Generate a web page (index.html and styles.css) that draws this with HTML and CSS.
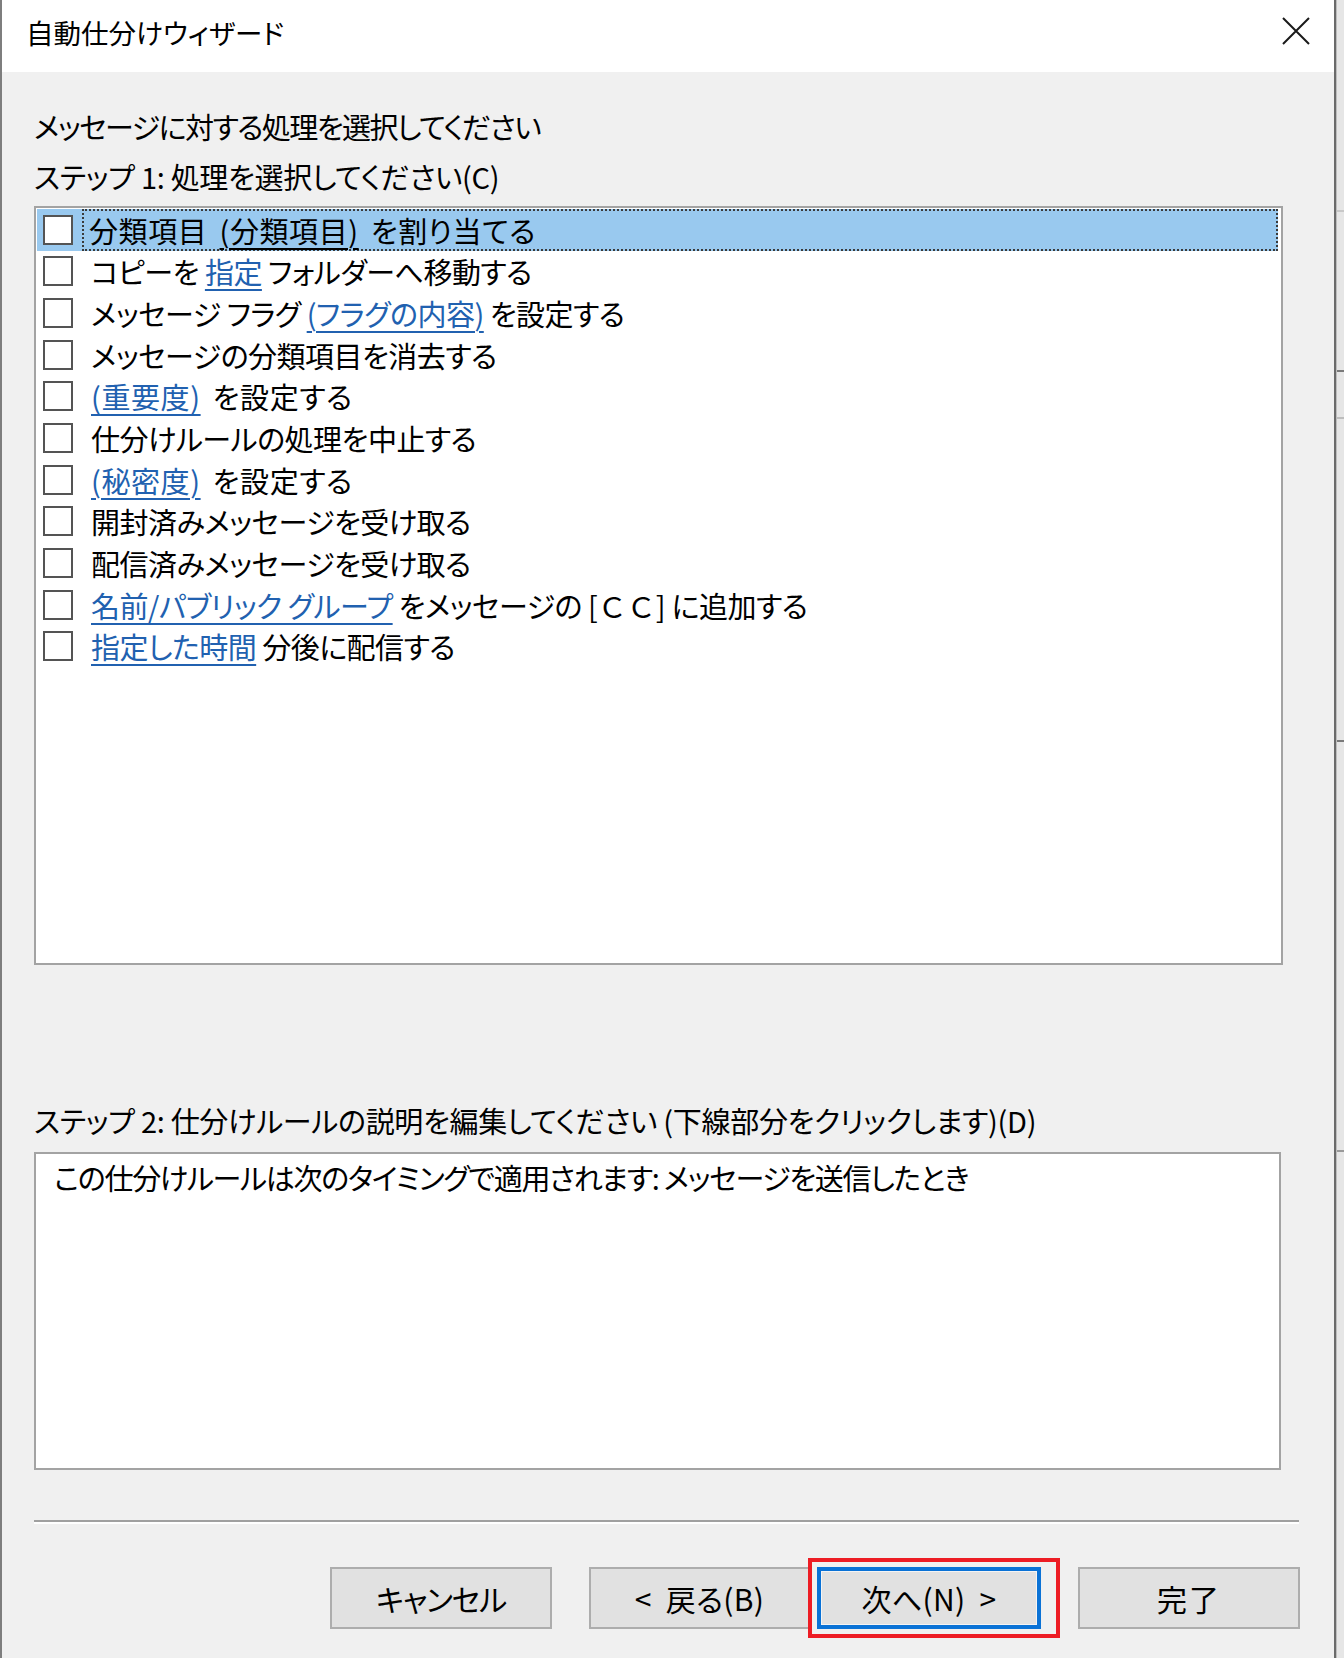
FILE: index.html
```html
<!DOCTYPE html>
<html lang="ja">
<head>
<meta charset="utf-8">
<title>自動仕分けウィザード</title>
<link rel="stylesheet" href="styles.css">
</head>
<body>
<div class="screen">
  <div class="dialog">
    <div class="titlebar">
      <span class="title">自動仕分けウィザード</span>
      <svg class="close" width="28" height="28" viewBox="0 0 28 28"><path d="M1 1 L27 27 M27 1 L1 27" stroke="#1a1a1a" stroke-width="2" fill="none"/></svg>
    </div>
    <div class="body">
      <div class="label first">メッセージに対する処理を選択してください</div>
      <div class="label">ステップ 1: 処理を選択してください(C)</div>
      <div class="listbox">
        <div class="row selected"><span class="check"></span><span class="text"><span>分類項目 <u class="dark">(分類項目)</u> を割り当てる</span></span></div>
        <div class="row"><span class="check"></span><span class="text">コピーを <u class="link">指定</u> フォルダーへ移動する</span></div>
        <div class="row"><span class="check"></span><span class="text">メッセージ フラグ <u class="link">(フラグの内容)</u> を設定する</span></div>
        <div class="row"><span class="check"></span><span class="text">メッセージの分類項目を消去する</span></div>
        <div class="row"><span class="check"></span><span class="text paren"><u class="link">(重要度)</u> を設定する</span></div>
        <div class="row"><span class="check"></span><span class="text">仕分けルールの処理を中止する</span></div>
        <div class="row"><span class="check"></span><span class="text paren"><u class="link">(秘密度)</u> を設定する</span></div>
        <div class="row"><span class="check"></span><span class="text">開封済みメッセージを受け取る</span></div>
        <div class="row"><span class="check"></span><span class="text">配信済みメッセージを受け取る</span></div>
        <div class="row"><span class="check"></span><span class="text"><u class="link">名前/パブリック グループ</u> をメッセージの <span class="wide">[ＣＣ]</span> に追加する</span></div>
        <div class="row"><span class="check"></span><span class="text"><u class="link">指定した時間</u> 分後に配信する</span></div>
      </div>
      <div class="label step2">ステップ 2: 仕分けルールの説明を編集してください (下線部分をクリックします)(D)</div>
      <div class="descbox">この仕分けルールは次のタイミングで適用されます: メッセージを送信したとき</div>
      <div class="separator"></div>
      <div class="buttons">
        <button class="btn cancel">キャンセル</button>
        <button class="btn back">&lt;&nbsp; 戻る(B)</button>
        <div class="next-wrap">
          <button class="btn primary">次へ(N)&nbsp; &gt;</button>
          <div class="annotation"></div>
        </div>
        <button class="btn finish">完了</button>
      </div>
    </div>
  </div>
  <div class="backstrip">
    <div class="bl l1"></div>
    <div class="bl l2"></div>
    <div class="bl l3"></div>
    <div class="bl l4"></div>
    <div class="bl l5"></div>
  </div>
</div>
</body>
</html>
```
FILE: styles.css
```css
html, body {
  margin: 0;
  padding: 0;
}
body {
  width: 1344px;
  height: 1658px;
  overflow: hidden;
  background: #f0f0f0;
  font-family: "Noto Sans CJK JP", "Noto Sans", sans-serif;
  font-feature-settings: "palt" 1;
  color: #000;
}
.screen {
  display: flex;
  width: 1344px;
  height: 1658px;
}
.dialog {
  width: 1332px;
  height: 1658px;
  border-left: 2px solid #7e7e7e;
  border-right: 2px solid #6a6a6a;
  background: #f0f0f0;
  display: flex;
  flex-direction: column;
}
.titlebar {
  height: 72px;
  background: #fff;
  display: flex;
  align-items: center;
  justify-content: space-between;
  padding: 0 24px 0 24px;
  flex: none;
}
.title {
  font-size: 27.5px;
  line-height: 32px;
  margin-top: -8px;
}
.close {
  margin-top: -10px;
  margin-right: 0;
}
.body {
  display: flex;
  flex-direction: column;
  padding-left: 32px;
}
.label {
  font-size: 29px;
  line-height: 50px;
  height: 50px;
  white-space: nowrap;
  letter-spacing: -0.3px;
}
.label.first {
  margin-top: 29px;
  letter-spacing: -1.5px;
}
.listbox {
  margin-top: 5px;
  width: 1241px;
  height: 753px;
  border: 2px solid #a3a3a3;
  background: #fff;
  padding: 1px 3px 1px 1px;
  box-sizing: content-box;
}
.row {
  height: 41.65px;
  display: flex;
  align-items: center;
  padding-left: 6px;
  font-size: 29px;
  white-space: nowrap;
  letter-spacing: -0.5px;
}
.row.selected {
  background: #99c9ef;
}
.check {
  width: 26px;
  height: 26px;
  border: 2px solid #545454;
  background: #fff;
  flex: none;
}
.text {
  margin-left: 11px;
  padding-left: 7px;
  line-height: 38px;
}
.text.paren {
  letter-spacing: 0.6px;
  word-spacing: 5px;
}
.row.selected .text {
  flex: 1;
  align-self: stretch;
  display: flex;
  align-items: center;
  border: 2px dotted #3a3a3a;
  margin-left: 9px;
  padding-left: 5px;
  letter-spacing: 0.6px;
  word-spacing: 5px;
}
.wide {
  font-feature-settings: "palt" 0;
  letter-spacing: 0;
}
u {
  text-decoration-thickness: 2px;
  text-underline-offset: 5px;
}
u.link {
  color: #2161b0;
}
u.dark {
  color: #000;
}
.step2 {
  margin-top: 130px;
}
.descbox {
  margin-top: 7px;
  width: 1225px;
  height: 314px;
  border: 2px solid #a3a3a3;
  background: #fff;
  font-size: 29px;
  line-height: 46px;
  padding-left: 18px;
  box-sizing: content-box;
  white-space: nowrap;
  letter-spacing: -1.3px;
}
.separator {
  margin-top: 50px;
  width: 1265px;
  height: 0;
  border-top: 2px solid #a0a0a0;
  border-bottom: 2px solid #ffffff;
}
.buttons {
  margin-top: 43px;
  display: flex;
  width: 1266px;
  justify-content: flex-end;
  align-items: flex-start;
}
.btn {
  width: 222px;
  height: 62px;
  box-sizing: border-box;
  border: 2px solid #adadad;
  background: #e1e1e1;
  font-family: "Noto Sans CJK JP", "Noto Sans", sans-serif;
  font-feature-settings: "palt" 1;
  font-size: 30px;
  letter-spacing: 0.3px;
  color: #000;
  padding: 0;
  margin: 0;
  white-space: nowrap;
}
.btn.cancel {
  letter-spacing: -1.2px;
}
.btn.back {
  margin-left: 37px;
  width: 221px;
}
.next-wrap {
  position: relative;
  margin-left: 7px;
}
.btn.primary {
  width: 224px;
  border: 4px solid #0a72d6;
  box-shadow: inset 0 0 0 1px #f4f4f4;
}
.annotation {
  position: absolute;
  left: -9px;
  top: -9px;
  width: 252px;
  height: 80px;
  box-sizing: border-box;
  border: 4px solid #ed1c24;
}
.btn.finish {
  margin-left: 37px;
  letter-spacing: 2px;
}
.backstrip {
  position: relative;
  width: 8px;
  height: 1658px;
  background: #e6e6e6;
  border-left: 1px solid #bdbdbd;
  box-sizing: border-box;
}
.bl {
  position: absolute;
  left: 0;
  width: 8px;
  height: 2px;
  background: #9a9a9a;
}
.l1 { top: 210px; background: #c8c8c8; }
.l2 { top: 370px; background: #7a7a7a; }
.l3 { top: 417px; background: #bdbdbd; }
.l4 { top: 740px; background: #7a7a7a; }
.l5 { top: 1150px; background: #9a9a9a; }
```
